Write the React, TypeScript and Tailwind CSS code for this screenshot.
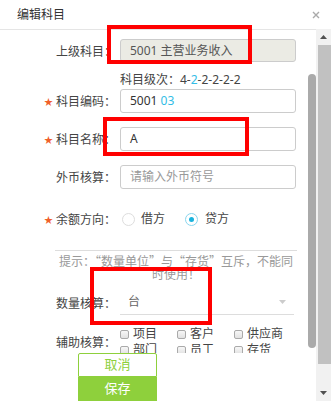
const font = { fontFamily: '"Noto Sans", "Noto Sans CJK SC", sans-serif' };
const cjk = { fontFamily: '"Noto Sans CJK SC", sans-serif' };

function Star() {
  return <span className="mr-[3px] text-[9px] leading-none text-[#f0602a]">★</span>;
}

function Label({ text, required }: { text: string; required?: boolean }) {
  return (
    <div className="flex w-[116px] shrink-0 items-center justify-end text-[12px] text-[#444]">
      {required && <Star />}
      <span style={cjk}>{text}：</span>
    </div>
  );
}

function Check({ text }: { text: string }) {
  return (
    <label className="flex w-[57px] items-center">
      <span className="h-[9px] w-[9px] rounded-[2px] border border-[#aaa] bg-gradient-to-b from-[#f7f7f7] to-[#e2e2e2]" />
      <span className="ml-[4px]">{text}</span>
    </label>
  );
}

export default function App() {
  return (
    <div style={font} className="relative h-[401px] w-[331px] overflow-hidden bg-white text-[12px] text-[#333]">
      {/* Header */}
      <div className="flex h-[29px] items-center justify-between pl-[17px] pr-[11px]">
        <span className="text-[12px] text-[#333]">编辑科目</span>
        <svg width="8" height="8" viewBox="0 0 8 8" className="mt-[1px]">
          <path d="M1 1L7 7M7 1L1 7" stroke="#aaa" strokeWidth="1.4" />
        </svg>
      </div>

      <div className="flex h-[372px]">
        <div className="flex w-[316px] flex-col border-t border-[#e5e5e5]">
          <div className="flex h-[328px] overflow-hidden">
            <div className="flex w-[308px] flex-col pt-[9px]">
              {/* 上级科目 */}
              <div className="flex h-[23px] items-center">
                <Label text="上级科目" />
                <div className="ml-[4px] flex h-[23px] w-[176px] items-center rounded-[3px] border border-[#ccc] bg-[#ebebe4] pl-[9px] text-[#555]">
                  5001 主营业务收入
                </div>
              </div>

              <div className="ml-[120px] mt-[11px] h-[14px] leading-[14px] text-[#444]">
                科目级次：4-<span className="text-[#33bde6]">2</span>-2-2-2-2
              </div>

              {/* 科目编码 */}
              <div className="mt-[2px] flex h-[24px] items-center">
                <Label text="科目编码" required />
                <div className="ml-[4px] flex h-[24px] w-[176px] items-center rounded-[3px] border border-[#ccc] pl-[9px] text-[#333]">
                  5001&nbsp;<span className="text-[#33bde6]">03</span>
                </div>
              </div>

              {/* 科目名称 */}
              <div className="mt-[14px] flex h-[24px] items-center">
                <Label text="科目名称" required />
                <div className="ml-[4px] flex h-[24px] w-[176px] items-center rounded-[3px] border border-[#ccc] pl-[9px] text-[#333]">
                  A
                </div>
              </div>

              {/* 外币核算 */}
              <div className="mt-[14px] flex h-[24px] items-center">
                <Label text="外币核算" />
                <div className="ml-[4px] flex h-[24px] w-[176px] items-center rounded-[3px] border border-[#ccc] pl-[9px] text-[#999]">
                  请输入外币符号
                </div>
              </div>

              {/* 余额方向 */}
              <div className="mt-[21px] flex h-[20px] items-center">
                <Label text="余额方向" required />
                <div className="ml-[6px] flex items-center">
                  <span className="h-[13px] w-[13px] rounded-full border border-[#ddd] bg-white" />
                  <span className="ml-[6px] text-[#444]">借方</span>
                  <span className="ml-[20px] flex h-[13px] w-[13px] items-center justify-center rounded-full border border-[#8ad6ee] bg-white">
                    <span className="h-[5px] w-[5px] rounded-full bg-[#1ab3dd]" />
                  </span>
                  <span className="ml-[7px] text-[#444]">贷方</span>
                </div>
              </div>

              {/* 提示 */}
              <div
                style={cjk}
                className="ml-[55px] mt-[22px] w-[242px] border-t border-[#ddd] pt-[3px] text-center leading-[13px] text-[#999]"
              >
                提示：“数量单位”与“存货”互斥，不能同时使用！
              </div>

              {/* 数量核算 */}
              <div className="mt-[10px] flex h-[25px] items-center">
                <Label text="数量核算" />
                <div className="ml-[4px] flex h-[25px] w-[174px] items-center justify-between border-b border-[#ddd] pl-[8px] pr-[8px] text-[#666]">
                  <span>台</span>
                  <svg width="7" height="4" viewBox="0 0 7 4">
                    <path d="M0 0H7L3.5 4Z" fill="#ccc" />
                  </svg>
                </div>
              </div>

              {/* 辅助核算 */}
              <div className="mt-[11px] flex items-center">
                <Label text="辅助核算" />
                <div className="ml-[4px] flex flex-col text-[#444]">
                  <div className="flex h-[16px] items-center">
                    <Check text="项目" />
                    <Check text="客户" />
                    <Check text="供应商" />
                  </div>
                  <div className="flex h-[16px] items-center">
                    <Check text="部门" />
                    <Check text="员工" />
                    <Check text="存货" />
                  </div>
                </div>
              </div>
            </div>

            {/* inner scrollbar */}
            <div className="w-[8px] pt-[44px]">
              <div className="h-[274px] w-[8px] rounded-full bg-[#aaa]" />
            </div>
          </div>

          {/* buttons */}
          <div className="ml-[78px] flex w-[79px] flex-col">
            <button className="h-[24px] rounded-t-[2px] border border-[#8ed03c] bg-white text-[13px] text-[#8ed03c]">
              取消
            </button>
            <button className="h-[24px] bg-[#8ed03c] text-[13px] text-white">保存</button>
          </div>
        </div>

        {/* outer scrollbar */}
        <div className="flex w-[15px] flex-col bg-[#f1f1f1]">
          <div className="flex h-[16px] items-center justify-center">
            <svg width="7" height="4" viewBox="0 0 7 4">
              <path d="M0 4H7L3.5 0Z" fill="#505050" />
            </svg>
          </div>
          <div className="ml-[2px] h-[319px] bg-[#c1c1c1]" />
          <div className="flex flex-1 items-end justify-center pb-[6px]">
            <svg width="7" height="4" viewBox="0 0 7 4">
              <path d="M0 0H7L3.5 4Z" fill="#505050" />
            </svg>
          </div>
        </div>
      </div>

      {/* annotation boxes */}
      <div className="absolute left-[107px] top-[25px] h-[39px] w-[145px] border-[4px] border-[#ff0000]" />
      <div className="absolute left-[103px] top-[117px] h-[39px] w-[146px] border-[4px] border-[#ff0000]" />
      <div className="absolute left-[90px] top-[267px] h-[58px] w-[122px] border-[4px] border-[#ff0000]" />
    </div>
  );
}
